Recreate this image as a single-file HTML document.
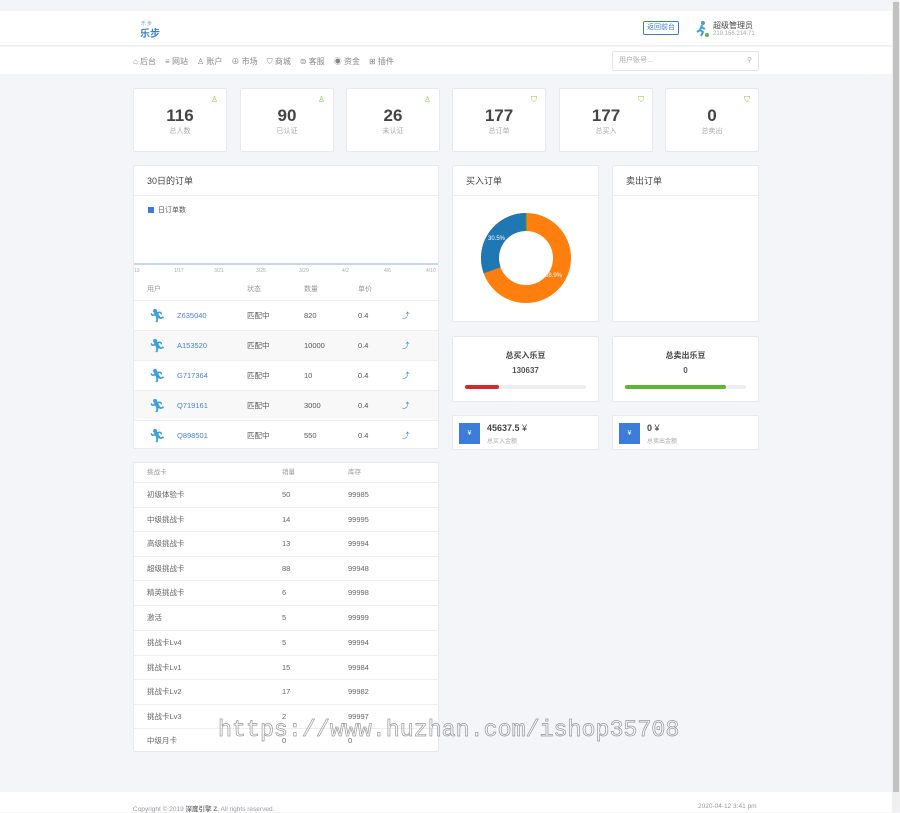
<!DOCTYPE html>
<html><head><meta charset="utf-8"><style>
*{box-sizing:border-box;margin:0;padding:0}
body{width:900px;height:812px;overflow:hidden;background:#f4f5f9;font-family:"Liberation Sans","Noto Sans CJK SC",sans-serif;color:#555;position:relative;font-size:8px}
.abs{position:absolute}
.card{position:absolute;background:#fff;border:1px solid #e8e9ee;border-radius:2px}
.stat{top:88px;height:64px;width:94px;text-align:center}
.stat .n{font-size:17px;color:#444;margin-top:18px;line-height:18px;font-weight:bold}
.stat .l{font-size:7px;color:#aaa;margin-top:1px}
.stat .i{position:absolute;right:8px;top:6px;color:#8bc34a;font-size:8px}
.title{height:30px;border-bottom:1px solid #eee;font-size:9px;line-height:30px;padding-left:13px;color:#444}
.row{position:absolute;left:0;right:0;height:30px;border-top:1px solid #eee;font-size:7.5px;line-height:30px}
.row span{position:absolute}
.crow{position:absolute;left:0;right:0;height:25px;border-top:1px solid #eee;font-size:7.5px;line-height:24px;color:#666}
.crow span{position:absolute}
.nav span{margin-right:9px}
</style></head><body>
<div class="abs" style="left:0;top:11px;width:892px;height:35px;background:#fff;border-bottom:1px solid #eee"></div>
<div class="abs" style="left:141px;top:20px;font-size:5px;color:#6aa3d8;letter-spacing:1px">乐步</div>
<div class="abs" style="left:140px;top:25px;font-size:10px;color:#3b82c4;font-weight:bold">乐步</div>
<div class="abs" style="left:643px;top:21px;width:36px;height:14px;border:1px solid #3b7dd8;border-radius:2px;font-size:7px;color:#3b7dd8;text-align:center;line-height:12px">返回前台</div>
<svg class="abs" style="left:693px;top:20px" width="18" height="18" viewBox="0 0 18 18"><circle cx="10" cy="3" r="2" fill="#3ea0d8"/><path d="M9 5 L7 10 L10 12 L8 16 M8 7 L12 9 M7 10 L4 12" stroke="#3ea0d8" stroke-width="2" fill="none"/><circle cx="14" cy="15" r="2" fill="#5cb82f"/></svg>
<div class="abs" style="left:713px;top:20px;font-size:8px;color:#444">超级管理员</div>
<div class="abs" style="left:713px;top:31px;font-size:6px;color:#aaa">219.156.214.71</div>
<div class="abs" style="left:0;top:47px;width:892px;height:27px;background:#fff"></div>
<div class="abs nav" style="left:133px;top:56px;font-size:8px;color:#888"><span>⌂ 后台</span><span>≡ 网站</span><span>♙ 账户</span><span>⊕ 市场</span><span>⛉ 商城</span><span>⊜ 客服</span><span>◉ 资金</span><span>⊞ 插件</span></div>
<div class="abs" style="left:612px;top:51px;width:147px;height:20px;border:1px solid #e5e5e5;border-radius:2px;font-size:7px;color:#aaa;line-height:18px;padding-left:6px">用户账号...<span style="position:absolute;right:6px">⚲</span></div>

<div class="card stat" style="left:133px"><div class="i">♙</div><div class="n">116</div><div class="l">总人数</div></div>
<div class="card stat" style="left:240px"><div class="i">♙</div><div class="n">90</div><div class="l">已认证</div></div>
<div class="card stat" style="left:346px"><div class="i">♙</div><div class="n">26</div><div class="l">未认证</div></div>
<div class="card stat" style="left:452px"><div class="i">⛉</div><div class="n">177</div><div class="l">总订单</div></div>
<div class="card stat" style="left:559px"><div class="i">⛉</div><div class="n">177</div><div class="l">总买入</div></div>
<div class="card stat" style="left:665px"><div class="i">⛉</div><div class="n">0</div><div class="l">总卖出</div></div>

<div class="card" style="left:133px;top:165px;width:306px;height:284px">
<div class="title">30日的订单</div>
<div class="abs" style="left:14px;top:41px;width:6px;height:6px;background:#3b7dd8"></div>
<div class="abs" style="left:24px;top:39px;font-size:7px;color:#555">日订单数</div>
<div class="abs" style="left:0;right:0;top:97px;height:2px;background:#c8d6ea"></div>
<div class="abs" style="left:0;right:0;top:102px;font-size:5px;color:#aaa"><span class="abs" style="left:0">13</span><span class="abs" style="left:40px">1/17</span><span class="abs" style="left:80px">3/21</span><span class="abs" style="left:122px">3/25</span><span class="abs" style="left:165px">3/29</span><span class="abs" style="left:208px">4/2</span><span class="abs" style="left:250px">4/6</span><span class="abs" style="left:292px">4/10</span></div>
<div class="abs" style="left:0;right:0;top:118px;font-size:7px;color:#999"><span class="abs" style="left:13px">用户</span><span class="abs" style="left:113px">状态</span><span class="abs" style="left:170px">数量</span><span class="abs" style="left:224px">单价</span></div>
<div class="row" style="top:134px"><span style="left:15px;color:#3ea0d8;font-size:13px">🏃︎</span><span style="left:43px;color:#4a7fd0">Z635040</span><span style="left:113px">匹配中</span><span style="left:170px">820</span><span style="left:224px">0.4</span><span style="left:268px;color:#3b7dd8">⤴</span></div>
<div class="row" style="top:164px;background:#f8f8f8"><span style="left:15px;color:#3ea0d8;font-size:13px">🏃︎</span><span style="left:43px;color:#4a7fd0">A153520</span><span style="left:113px">匹配中</span><span style="left:170px">10000</span><span style="left:224px">0.4</span><span style="left:268px;color:#3b7dd8">⤴</span></div>
<div class="row" style="top:194px"><span style="left:15px;color:#3ea0d8;font-size:13px">🏃︎</span><span style="left:43px;color:#4a7fd0">G717364</span><span style="left:113px">匹配中</span><span style="left:170px">10</span><span style="left:224px">0.4</span><span style="left:268px;color:#3b7dd8">⤴</span></div>
<div class="row" style="top:224px;background:#f8f8f8"><span style="left:15px;color:#3ea0d8;font-size:13px">🏃︎</span><span style="left:43px;color:#4a7fd0">Q719161</span><span style="left:113px">匹配中</span><span style="left:170px">3000</span><span style="left:224px">0.4</span><span style="left:268px;color:#3b7dd8">⤴</span></div>
<div class="row" style="top:254px"><span style="left:15px;color:#3ea0d8;font-size:13px">🏃︎</span><span style="left:43px;color:#4a7fd0">Q898501</span><span style="left:113px">匹配中</span><span style="left:170px">550</span><span style="left:224px">0.4</span><span style="left:268px;color:#3b7dd8">⤴</span></div>
</div>

<div class="card" style="left:452px;top:165px;width:147px;height:157px">
<div class="title">买入订单</div>
<svg class="abs" style="left:27px;top:46px" width="92" height="92" viewBox="0 0 92 92"><circle cx="46" cy="46" r="36" fill="none" stroke="#ff7f0e" stroke-width="18"/><circle cx="46" cy="46" r="36" fill="none" stroke="#1f77b4" stroke-width="18" stroke-dasharray="69 300" transform="rotate(160 46 46)"/><line x1="46" y1="1" x2="46" y2="19" stroke="#2ca02c" stroke-width="1"/></svg>
<div class="abs" style="left:35px;top:70px;font-size:6px;color:#fff">30.5%</div>
<div class="abs" style="left:92px;top:107px;font-size:6px;color:#fff">68.9%</div>
</div>
<div class="card" style="left:612px;top:165px;width:147px;height:157px"><div class="title">卖出订单</div></div>

<div class="card" style="left:452px;top:336px;width:147px;height:66px;text-align:center">
<div style="font-size:8px;font-weight:bold;color:#444;margin-top:13px">总买入乐豆</div>
<div style="font-size:8px;font-weight:bold;color:#555;margin-top:5px">130637</div>
<div class="abs" style="left:12px;top:48px;width:121px;height:4px;background:#eee;border-radius:2px"><div style="width:34px;height:4px;background:#d9262b;border-radius:2px"></div></div>
</div>
<div class="card" style="left:612px;top:336px;width:147px;height:66px;text-align:center">
<div style="font-size:8px;font-weight:bold;color:#444;margin-top:13px">总卖出乐豆</div>
<div style="font-size:8px;font-weight:bold;color:#555;margin-top:5px">0</div>
<div class="abs" style="left:12px;top:48px;width:121px;height:4px;background:#eee;border-radius:2px"><div style="width:101px;height:4px;background:#5cb82f;border-radius:2px"></div></div>
</div>
<div class="card" style="left:452px;top:415px;width:147px;height:35px">
<div class="abs" style="left:6px;top:7px;width:21px;height:21px;background:#3b7dd8;color:#fff;font-size:7px;text-align:center;line-height:21px">¥</div>
<div class="abs" style="left:34px;top:7px;font-size:9px;font-weight:bold;color:#444">45637.5 <span style="font-weight:normal">¥</span></div>
<div class="abs" style="left:34px;top:20px;font-size:6px;color:#aaa">总买入金额</div>
</div>
<div class="card" style="left:612px;top:415px;width:147px;height:35px">
<div class="abs" style="left:6px;top:7px;width:21px;height:21px;background:#3b7dd8;color:#fff;font-size:7px;text-align:center;line-height:21px">¥</div>
<div class="abs" style="left:34px;top:7px;font-size:9px;font-weight:bold;color:#444">0 <span style="font-weight:normal">¥</span></div>
<div class="abs" style="left:34px;top:20px;font-size:6px;color:#aaa">总卖出金额</div>
</div>

<div class="card" style="left:133px;top:462px;width:306px;height:290px">
<div class="abs" style="left:0;right:0;top:0;height:19px;font-size:6.5px;color:#999;line-height:19px"><span class="abs" style="left:13px">挑战卡</span><span class="abs" style="left:148px">销量</span><span class="abs" style="left:214px">库存</span></div>
<div class="crow" style="top:19px"><span style="left:13px">初级体验卡</span><span style="left:148px">50</span><span style="left:214px">99985</span></div>
<div class="crow" style="top:44px"><span style="left:13px">中级挑战卡</span><span style="left:148px">14</span><span style="left:214px">99995</span></div>
<div class="crow" style="top:68px"><span style="left:13px">高级挑战卡</span><span style="left:148px">13</span><span style="left:214px">99994</span></div>
<div class="crow" style="top:93px"><span style="left:13px">超级挑战卡</span><span style="left:148px">88</span><span style="left:214px">99948</span></div>
<div class="crow" style="top:117px"><span style="left:13px">精英挑战卡</span><span style="left:148px">6</span><span style="left:214px">99998</span></div>
<div class="crow" style="top:142px"><span style="left:13px">激活</span><span style="left:148px">5</span><span style="left:214px">99999</span></div>
<div class="crow" style="top:167px"><span style="left:13px">挑战卡Lv4</span><span style="left:148px">5</span><span style="left:214px">99994</span></div>
<div class="crow" style="top:192px"><span style="left:13px">挑战卡Lv1</span><span style="left:148px">15</span><span style="left:214px">99984</span></div>
<div class="crow" style="top:216px"><span style="left:13px">挑战卡Lv2</span><span style="left:148px">17</span><span style="left:214px">99982</span></div>
<div class="crow" style="top:241px"><span style="left:13px">挑战卡Lv3</span><span style="left:148px">2</span><span style="left:214px">99997</span></div>
<div class="crow" style="top:265px"><span style="left:13px">中级月卡</span><span style="left:148px">0</span><span style="left:214px">0</span></div>
</div>

<div class="abs" style="left:218px;top:717px;font-family:'Liberation Mono','DejaVu Sans Mono',monospace;font-size:23.3px;color:transparent;-webkit-text-stroke:0.7px #999;white-space:nowrap">https://www.huzhan.com/ishop35708</div>

<div class="abs" style="left:0;top:792px;width:892px;height:20px;background:#fff"></div>
<div class="abs" style="left:133px;top:803px;font-size:6.5px;color:#999">Copyright © 2019 <b style="color:#777">深度引擎 Z</b>. All rights reserved.</div>
<div class="abs" style="left:698px;top:803px;font-size:6.5px;color:#999">2020-04-12 3:41 pm</div>
<div class="abs" style="left:892px;top:0;width:8px;height:812px;background:#f0f0f0"></div>
<div class="abs" style="left:893px;top:2px;width:6px;height:790px;background:#c1c1c1"></div>
</body></html>
